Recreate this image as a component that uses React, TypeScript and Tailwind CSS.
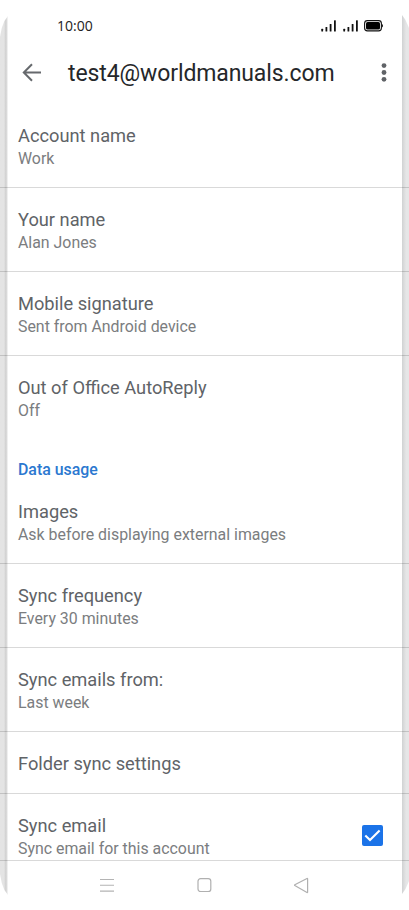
import React, { useState } from "react";
import { clsx } from "clsx";

interface SettingRowProps {
  title: string;
  summary?: string;
  divider?: boolean;
}

const accountSettings: SettingRowProps[] = [
  { title: "Account name", summary: "Work" },
  { title: "Your name", summary: "Alan Jones" },
  { title: "Mobile signature", summary: "Sent from Android device" },
  { title: "Out of Office AutoReply", summary: "Off", divider: false },
];

const dataSettings: SettingRowProps[] = [
  { title: "Images", summary: "Ask before displaying external images" },
  { title: "Sync frequency", summary: "Every 30 minutes" },
  { title: "Sync emails from:", summary: "Last week" },
  { title: "Folder sync settings" },
];

const SettingText = ({ title, summary }: SettingRowProps) => (
  <div>
    <div className="text-[18.25px] leading-[23px] text-[#606367]">{title}</div>
    {summary && (
      <div className="text-[15.9px] leading-[23px] text-[#7b7d80]">
        {summary}
      </div>
    )}
  </div>
);

const SettingRow = ({ title, summary, divider = true }: SettingRowProps) => (
  <div
    className={clsx(
      "border-b pl-[18px] pt-5",
      summary ? "h-[84px]" : "h-[62px]",
      divider ? "border-black/15" : "border-transparent"
    )}
  >
    <SettingText title={title} summary={summary} />
  </div>
);

const SignalIcon = () => (
  <svg width="16" height="12" viewBox="0 0 16 12" fill="#111">
    <rect x="0.3" y="8.8" width="1.8" height="2.7" rx="0.5" />
    <rect x="4.5" y="7" width="1.8" height="4.5" rx="0.5" />
    <rect x="8.7" y="4" width="1.8" height="7.5" rx="0.5" />
    <rect x="13" y="0.3" width="1.8" height="11.2" rx="0.5" />
  </svg>
);

const StatusBar = () => (
  <div className="flex h-[52px] items-center justify-between pl-[57px] pr-[26px]">
    <span className="font-['Open_Sans',sans-serif] text-[14px] leading-none text-[#222]">
      10:00
    </span>
    <div className="flex items-center gap-[5.5px]">
      <SignalIcon />
      <SignalIcon />
      <svg width="19" height="12" viewBox="0 0 19 12">
        <rect x="0.6" y="0.6" width="16.8" height="10.3" rx="2.8" fill="none" stroke="#111" strokeWidth="1.1" />
        <rect x="2" y="2" width="14" height="7.5" rx="1.6" fill="#000" />
        <path d="M18 4v3.5q1-.5 1-1.75T18 4" fill="#111" />
      </svg>
    </div>
  </div>
);

const Header = () => (
  <div className="flex h-[52px] items-start">
    <button className="ml-[22px] mt-[11px]" aria-label="Back">
      <svg width="20" height="19" viewBox="0 0 20 19" fill="none" stroke="#66696d" strokeWidth="2">
        <path d="M19 9.5H2M10 1.2 1.8 9.5 10 17.8" />
      </svg>
    </button>
    <h1 className="ml-[26px] mt-[7px] flex-1 whitespace-nowrap text-[23px] leading-[30px] tracking-[-0.11px] text-[#25272a]">
      test4@worldmanuals.com
    </h1>
    <button className="mr-[22px] mt-[11px]" aria-label="More options">
      <svg width="6" height="20" viewBox="0 0 6 20" fill="#606367">
        <circle cx="3" cy="2.6" r="2.4" />
        <circle cx="3" cy="9.5" r="2.4" />
        <circle cx="3" cy="16.3" r="2.4" />
      </svg>
    </button>
  </div>
);

const NavigationBar = () => (
  <div className="flex h-[50px] items-start border-t border-black/15 pl-[99px] pt-4">
    <svg width="16" height="16" viewBox="0 0 16 16" stroke="#b4b4b4" strokeWidth="1.1">
      <path d="M1 2.5h14M1 8.3h14M1 14.1h14" />
    </svg>
    <svg className="ml-[82px]" width="16" height="16" viewBox="0 0 16 16" fill="none" stroke="#b0b0b0" strokeWidth="1.2">
      <rect x="1" y="1.7" width="12.8" height="12.8" rx="2.6" />
    </svg>
    <svg className="ml-[80px]" width="17" height="17" viewBox="0 0 17 17" fill="none" stroke="#b0b0b0" strokeWidth="1.2" strokeLinejoin="round">
      <path d="M14.6 1.8v13.4q0 .6-.6.2L1.8 8.6q-.5-.4 0-.8L14 1.5q.6-.3.6.3Z" />
    </svg>
  </div>
);

const App = () => {
  const [syncEmail, setSyncEmail] = useState(true);

  return (
    <div className="relative isolate h-[910px] w-[409px] overflow-hidden bg-white font-['Roboto',sans-serif]">
      {/* curved screen edges, the dividers run across them */}
      <div className="absolute bottom-[15px] left-0 top-4 -z-10 w-2 bg-linear-to-r from-[#e4e4e4] from-50% via-[#cecece] via-75% to-[#fafafa] [clip-path:polygon(100%_0,55%_5px,22%_12px,0_21px,0_calc(100%_-_21px),22%_calc(100%_-_12px),55%_calc(100%_-_5px),100%_100%)]" />
      <div className="absolute bottom-[16px] right-0 top-[15px] -z-10 w-[7px] bg-linear-to-r from-[#d0d2d3] to-[#e6e6e7] to-60% [clip-path:polygon(0_0,50%_5px,100%_13px,100%_calc(100%_-_13px),50%_calc(100%_-_5px),0_100%)]" />

      <StatusBar />
      <Header />

      {accountSettings.map((setting) => (
        <SettingRow key={setting.title} {...setting} />
      ))}

      <h2 className="h-10 pl-[18px] pt-[18px] text-[15.9px] font-medium leading-[23px] text-[#2b78d0]">
        Data usage
      </h2>

      {dataSettings.map((setting) => (
        <SettingRow key={setting.title} {...setting} />
      ))}

      <div className="flex h-[66px] items-start justify-between pl-[18px] pr-[26px] pt-5">
        <SettingText title="Sync email" summary="Sync email for this account" />
        <button
          role="checkbox"
          aria-checked={syncEmail}
          aria-label="Sync email"
          onClick={() => setSyncEmail(!syncEmail)}
          className={clsx(
            "mt-[11px] flex h-[21px] w-[21px] items-center justify-center rounded-[2px]",
            syncEmail ? "bg-[#1b73e8]" : "border-2 border-[#606367]"
          )}
        >
          {syncEmail && (
            <svg width="17" height="13" viewBox="0 0 17 13" fill="none" stroke="#fff" strokeWidth="2.1">
              <path d="M1.3 6.4 6 11 15.6 1.4" />
            </svg>
          )}
        </button>
      </div>

      <NavigationBar />
    </div>
  );
};

export default App;
